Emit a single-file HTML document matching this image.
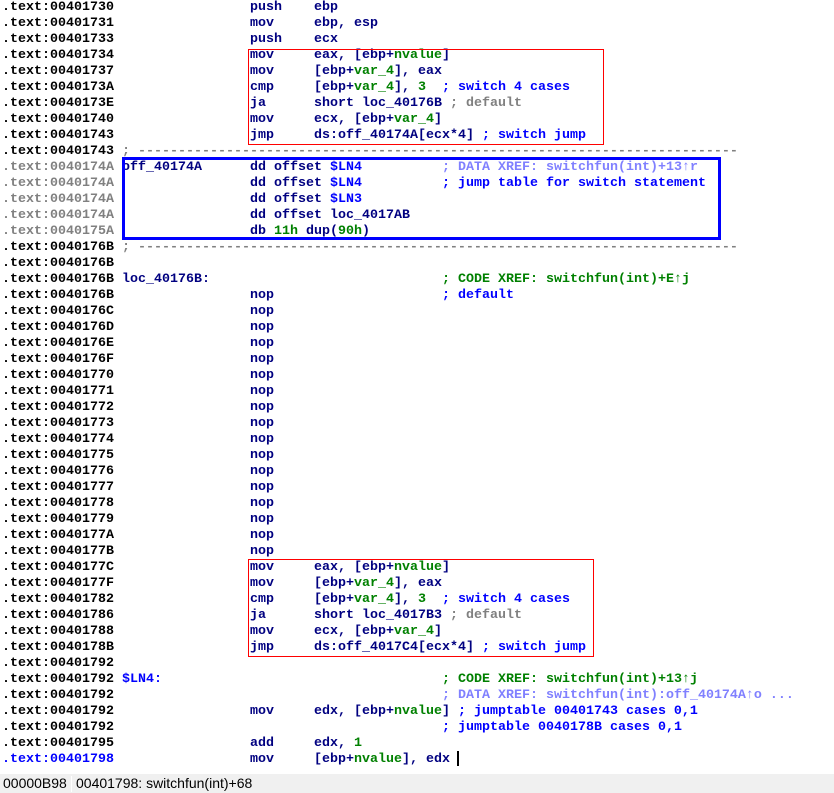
<!DOCTYPE html>
<html><head><meta charset="utf-8"><style>
html,body{margin:0;padding:0;width:834px;height:793px;overflow:hidden;background:#fff}
#v{position:absolute;left:0;top:0;width:834px;height:774px;background:#fff;font:bold 13.33px "Liberation Mono",monospace;}
.r{position:absolute;left:0;height:16px;line-height:16px;white-space:pre;width:834px;margin-top:2px}
.r span{position:absolute;top:0}
.a{left:2px;color:#000}
.g{color:#808080!important}
.l{left:122px;color:#000080}
.m{left:250px;color:#000080}
.o{left:314px;color:#000080}
.c{left:442px;color:#0000ff}
.gr{color:#008000}
.bl{color:#0000ff}
.gy{color:#808080}
.lp{color:#8080ff}
.box{position:absolute;box-sizing:border-box}
#sb{position:absolute;left:0;top:774px;width:834px;height:19px;background:#f0f0f0;font:14px "Liberation Sans",sans-serif;color:#000;line-height:19px}
</style></head><body>
<div id="v">
<div class="r" style="top:-2px"><span class="a">.text:00401730</span><span class="m">push</span><span class="o">ebp</span></div>
<div class="r" style="top:14px"><span class="a">.text:00401731</span><span class="m">mov</span><span class="o">ebp, esp</span></div>
<div class="r" style="top:30px"><span class="a">.text:00401733</span><span class="m">push</span><span class="o">ecx</span></div>
<div class="r" style="top:46px"><span class="a">.text:00401734</span><span class="m">mov</span><span class="o">eax, [ebp+<b class="gr">nvalue</b>]</span></div>
<div class="r" style="top:62px"><span class="a">.text:00401737</span><span class="m">mov</span><span class="o">[ebp+<b class="gr">var_4</b>], eax</span></div>
<div class="r" style="top:78px"><span class="a">.text:0040173A</span><span class="m">cmp</span><span class="o">[ebp+<b class="gr">var_4</b>], <b class="gr">3</b>  <b class="bl">; switch 4 cases</b></span></div>
<div class="r" style="top:94px"><span class="a">.text:0040173E</span><span class="m">ja</span><span class="o">short loc_40176B <b class="gy">; default</b></span></div>
<div class="r" style="top:110px"><span class="a">.text:00401740</span><span class="m">mov</span><span class="o">ecx, [ebp+<b class="gr">var_4</b>]</span></div>
<div class="r" style="top:126px"><span class="a">.text:00401743</span><span class="m">jmp</span><span class="o">ds:off_40174A[ecx*4] <b class="bl">; switch jump</b></span></div>
<div class="r" style="top:142px"><span class="a">.text:00401743</span><span class="l gy">; ---------------------------------------------------------------------------</span></div>
<div class="r" style="top:158px"><span class="a g">.text:0040174A</span><span class="l">off_40174A</span><span class="m">dd offset <b class="bl">$LN4</b></span><span class="c lp">; DATA XREF: switchfun(int)+13↑r</span></div>
<div class="r" style="top:174px"><span class="a g">.text:0040174A</span><span class="m">dd offset <b class="bl">$LN4</b></span><span class="c">; jump table for switch statement</span></div>
<div class="r" style="top:190px"><span class="a g">.text:0040174A</span><span class="m">dd offset <b class="bl">$LN3</b></span></div>
<div class="r" style="top:206px"><span class="a g">.text:0040174A</span><span class="m">dd offset loc_4017AB</span></div>
<div class="r" style="top:222px"><span class="a g">.text:0040175A</span><span class="m">db <b class="gr">11h</b> dup(<b class="gr">90h</b>)</span></div>
<div class="r" style="top:238px"><span class="a">.text:0040176B</span><span class="l gy">; ---------------------------------------------------------------------------</span></div>
<div class="r" style="top:254px"><span class="a">.text:0040176B</span></div>
<div class="r" style="top:270px"><span class="a">.text:0040176B</span><span class="l">loc_40176B:</span><span class="c gr">; CODE XREF: switchfun(int)+E↑j</span></div>
<div class="r" style="top:286px"><span class="a">.text:0040176B</span><span class="m">nop</span><span class="c">; default</span></div>
<div class="r" style="top:302px"><span class="a">.text:0040176C</span><span class="m">nop</span></div>
<div class="r" style="top:318px"><span class="a">.text:0040176D</span><span class="m">nop</span></div>
<div class="r" style="top:334px"><span class="a">.text:0040176E</span><span class="m">nop</span></div>
<div class="r" style="top:350px"><span class="a">.text:0040176F</span><span class="m">nop</span></div>
<div class="r" style="top:366px"><span class="a">.text:00401770</span><span class="m">nop</span></div>
<div class="r" style="top:382px"><span class="a">.text:00401771</span><span class="m">nop</span></div>
<div class="r" style="top:398px"><span class="a">.text:00401772</span><span class="m">nop</span></div>
<div class="r" style="top:414px"><span class="a">.text:00401773</span><span class="m">nop</span></div>
<div class="r" style="top:430px"><span class="a">.text:00401774</span><span class="m">nop</span></div>
<div class="r" style="top:446px"><span class="a">.text:00401775</span><span class="m">nop</span></div>
<div class="r" style="top:462px"><span class="a">.text:00401776</span><span class="m">nop</span></div>
<div class="r" style="top:478px"><span class="a">.text:00401777</span><span class="m">nop</span></div>
<div class="r" style="top:494px"><span class="a">.text:00401778</span><span class="m">nop</span></div>
<div class="r" style="top:510px"><span class="a">.text:00401779</span><span class="m">nop</span></div>
<div class="r" style="top:526px"><span class="a">.text:0040177A</span><span class="m">nop</span></div>
<div class="r" style="top:542px"><span class="a">.text:0040177B</span><span class="m">nop</span></div>
<div class="r" style="top:558px"><span class="a">.text:0040177C</span><span class="m">mov</span><span class="o">eax, [ebp+<b class="gr">nvalue</b>]</span></div>
<div class="r" style="top:574px"><span class="a">.text:0040177F</span><span class="m">mov</span><span class="o">[ebp+<b class="gr">var_4</b>], eax</span></div>
<div class="r" style="top:590px"><span class="a">.text:00401782</span><span class="m">cmp</span><span class="o">[ebp+<b class="gr">var_4</b>], <b class="gr">3</b>  <b class="bl">; switch 4 cases</b></span></div>
<div class="r" style="top:606px"><span class="a">.text:00401786</span><span class="m">ja</span><span class="o">short loc_4017B3 <b class="gy">; default</b></span></div>
<div class="r" style="top:622px"><span class="a">.text:00401788</span><span class="m">mov</span><span class="o">ecx, [ebp+<b class="gr">var_4</b>]</span></div>
<div class="r" style="top:638px"><span class="a">.text:0040178B</span><span class="m">jmp</span><span class="o">ds:off_4017C4[ecx*4] <b class="bl">; switch jump</b></span></div>
<div class="r" style="top:654px"><span class="a">.text:00401792</span></div>
<div class="r" style="top:670px"><span class="a">.text:00401792</span><span class="l bl">$LN4:</span><span class="c gr">; CODE XREF: switchfun(int)+13↑j</span></div>
<div class="r" style="top:686px"><span class="a">.text:00401792</span><span class="c lp">; DATA XREF: switchfun(int):off_40174A↑o ...</span></div>
<div class="r" style="top:702px"><span class="a">.text:00401792</span><span class="m">mov</span><span class="o">edx, [ebp+<b class="gr">nvalue</b>] <b class="bl">; jumptable 00401743 cases 0,1</b></span></div>
<div class="r" style="top:718px"><span class="a">.text:00401792</span><span class="c">; jumptable 0040178B cases 0,1</span></div>
<div class="r" style="top:734px"><span class="a">.text:00401795</span><span class="m">add</span><span class="o">edx, <b class="gr">1</b></span></div>
<div class="r" style="top:750px"><span class="a bl">.text:00401798</span><span class="m">mov</span><span class="o">[ebp+<b class="gr">nvalue</b>], edx</span></div>
<div class="box" style="left:457px;top:751px;width:2px;height:15px;background:#000"></div>
<div class="box" style="left:248px;top:49px;width:356px;height:96px;border:1px solid #ff0000"></div>
<div class="box" style="left:122px;top:157px;width:599px;height:83px;border:3px solid #0000ff"></div>
<div class="box" style="left:248px;top:559px;width:346px;height:98px;border:1px solid #ff0000"></div>
</div>
<div id="sb"><span style="position:absolute;left:3px;width:68px;overflow:hidden;white-space:nowrap">00000B98</span><span style="position:absolute;left:71px;top:2px;width:1px;height:16px;background:#fff"></span><span style="position:absolute;left:76px;white-space:nowrap">00401798: switchfun(int)+68</span></div>
</body></html>
